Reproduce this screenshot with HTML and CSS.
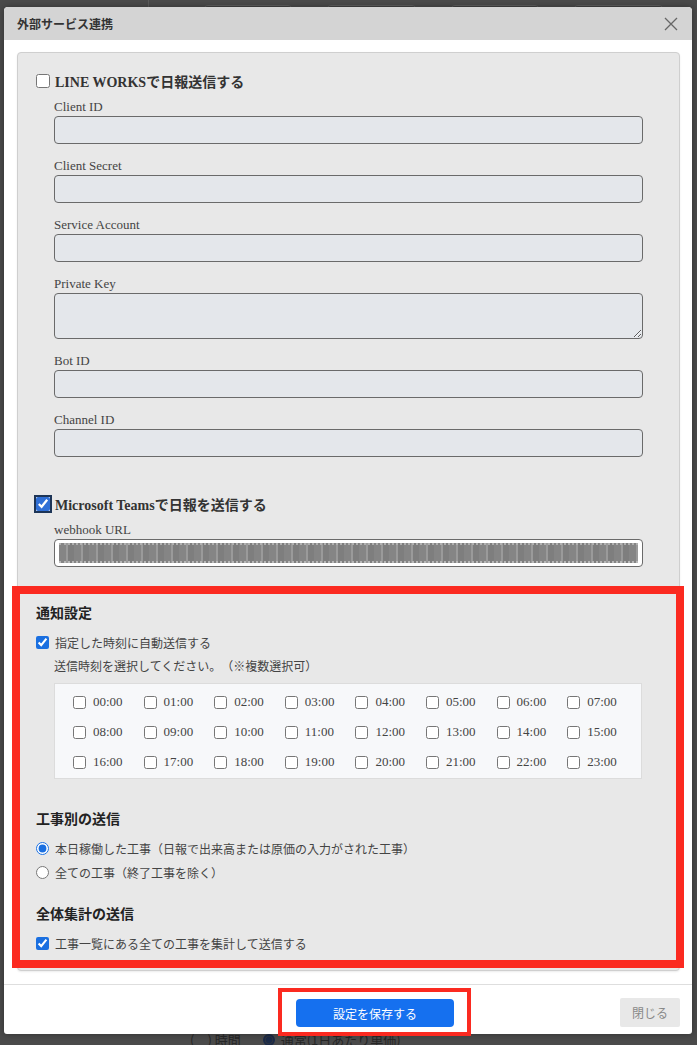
FILE: index.html
```html
<!DOCTYPE html>
<html lang="ja">
<head>
  <meta charset="UTF-8" />
  <meta name="viewport" content="width=device-width, initial-scale=1.0"/>
  <title>外部サービス連携</title>
  <link rel="stylesheet" href="styles.css">
</head>
<body>
  <div class="page-top">
    <span class="page-divider"></span>
    <span class="page-btn"></span>
    <span class="page-btn"></span>
    <span class="page-btn"></span>
    <span class="page-btn"></span>
  </div>

  <div class="modal">
    <div class="modal-header">
      <span class="modal-title">外部サービス連携</span>
      <button class="close-btn" type="button" aria-label="閉じる">
        <svg width="14" height="14" viewBox="0 0 14 14"><path d="M1 1 L13 13 M13 1 L1 13" stroke="#666" stroke-width="1.3" fill="none"/></svg>
      </button>
    </div>

    <div class="modal-body">
      <div class="panel">
        <label class="service-check"><input type="checkbox"> LINE WORKSで日報送信する</label>
        <div class="fields">
          <label class="field-label">Client ID</label>
          <input class="field" type="text">
          <label class="field-label">Client Secret</label>
          <input class="field" type="text">
          <label class="field-label">Service Account</label>
          <input class="field" type="text">
          <label class="field-label">Private Key</label>
          <textarea class="field area"></textarea>
          <label class="field-label">Bot ID</label>
          <input class="field" type="text">
          <label class="field-label">Channel ID</label>
          <input class="field" type="text">
        </div>

        <label class="service-check teams"><input type="checkbox" checked> Microsoft Teamsで日報を送信する</label>
        <div class="fields">
          <label class="field-label">webhook URL</label>
          <div class="field url"><span class="redacted"></span></div>
        </div>

        <section class="notify">
          <h3 class="notify-title">通知設定</h3>
          <label class="opt"><input type="checkbox" checked> 指定した時刻に自動送信する</label>
          <p class="hint">送信時刻を選択してください。（※複数選択可）</p>
          <div class="times">
            <label class="time"><input type="checkbox"> 00:00</label>
            <label class="time"><input type="checkbox"> 01:00</label>
            <label class="time"><input type="checkbox"> 02:00</label>
            <label class="time"><input type="checkbox"> 03:00</label>
            <label class="time"><input type="checkbox"> 04:00</label>
            <label class="time"><input type="checkbox"> 05:00</label>
            <label class="time"><input type="checkbox"> 06:00</label>
            <label class="time"><input type="checkbox"> 07:00</label>
            <label class="time"><input type="checkbox"> 08:00</label>
            <label class="time"><input type="checkbox"> 09:00</label>
            <label class="time"><input type="checkbox"> 10:00</label>
            <label class="time"><input type="checkbox"> 11:00</label>
            <label class="time"><input type="checkbox"> 12:00</label>
            <label class="time"><input type="checkbox"> 13:00</label>
            <label class="time"><input type="checkbox"> 14:00</label>
            <label class="time"><input type="checkbox"> 15:00</label>
            <label class="time"><input type="checkbox"> 16:00</label>
            <label class="time"><input type="checkbox"> 17:00</label>
            <label class="time"><input type="checkbox"> 18:00</label>
            <label class="time"><input type="checkbox"> 19:00</label>
            <label class="time"><input type="checkbox"> 20:00</label>
            <label class="time"><input type="checkbox"> 21:00</label>
            <label class="time"><input type="checkbox"> 22:00</label>
            <label class="time"><input type="checkbox"> 23:00</label>
          </div>

          <h3 class="notify-title spaced">工事別の送信</h3>
          <label class="opt"><input type="radio" name="scope" checked> 本日稼働した工事（日報で出来高または原価の入力がされた工事）</label>
          <label class="opt tight"><input type="radio" name="scope"> 全ての工事（終了工事を除く）</label>

          <h3 class="notify-title spaced-sm">全体集計の送信</h3>
          <label class="opt"><input type="checkbox" checked> 工事一覧にある全ての工事を集計して送信する</label>
        </section>
      </div>
    </div>

    <div class="modal-footer">
      <div class="mark">
        <button class="save-btn" type="button">設定を保存する</button>
      </div>
      <button class="close-footer" type="button">閉じる</button>
    </div>
  </div>

  <div class="page-bottom">
    <span>(　) 時間</span>
    <span class="dim-radio"></span>
    <span>通常(1日あたり単価)</span>
  </div>
</body>
</html>
```

FILE: styles.css
```css
body {
  margin: 0;
  background: #4a4a4a;
  font-family: "Liberation Serif", "Noto Sans CJK JP", serif;
  color: #333;
  overflow: hidden;
}
.page-top {
  height: 7px;
  overflow: hidden;
  display: flex;
  align-items: flex-start;
}
.page-divider {
  width: 1px;
  height: 7px;
  background: #5c5c5c;
  margin-left: 148px;
  margin-right: 54px;
}
.page-btn {
  width: 96px;
  height: 20px;
  margin-top: 5px;
  margin-right: 33px;
  border: 1px solid #5e5e5e;
  border-radius: 5px;
  background: #424242;
}
.modal {
  position: relative;
  z-index: 1;
  width: 688px;
  margin-left: 4px;
  background: white;
  border-radius: 4px 4px 3px 3px;
  box-shadow: 0 0 6px rgba(0,0,0,0.35);
}
.modal-header {
  height: 33px;
  background: #d4d4d4;
  border-radius: 4px 4px 0 0;
  display: flex;
  align-items: center;
  justify-content: space-between;
  padding: 0 14px 0 13px;
}
.modal-title {
  font-family: "Noto Sans CJK JP", sans-serif;
  font-size: 12px;
  font-weight: bold;
  color: #333;
}
.close-btn {
  border: none;
  background: none;
  padding: 0;
  width: 14px;
  height: 14px;
  display: flex;
}
.modal-body {
  padding: 12px 12px 13px 13px;
}
.panel {
  background: #e8e8e8;
  border: 1px solid #cfcfcf;
  border-radius: 4px;
  padding: 18px 18px 1px 18px;
  box-shadow: 0 1px 2px rgba(0,0,0,0.08);
}
.service-check {
  display: flex;
  align-items: center;
  gap: 5px;
  height: 20px;
  font-size: 14px;
  font-weight: bold;
  color: #333;
}
.service-check input {
  width: 14px;
  height: 14px;
  margin: 0;
}
.service-check.teams {
  margin-top: 37px;
}
.service-check.teams input {
  width: 14px;
  height: 14px;
  margin-left: 0;
  outline: 2px solid #1d3557;
  outline-offset: 0;
  accent-color: #2f6fd6;
}
.fields {
  padding: 0 18px;
  margin-top: 8px;
}
.field-label {
  display: block;
  height: 16px;
  line-height: 16px;
  font-size: 13px;
  color: #444;
  margin-bottom: 1px;
}
.field {
  display: block;
  box-sizing: border-box;
  width: 100%;
  height: 28px;
  margin: 0 0 14px 0;
  background: #e4e7eb;
  border: 1px solid #6a6a6a;
  border-radius: 4px;
  font-family: inherit;
}
.field.area {
  height: 46px;
  resize: vertical;
}
.field.url {
  background: white;
  margin-bottom: 0;
  padding: 3px 4px;
}
.redacted {
  display: block;
  height: 20px;
  background: repeating-linear-gradient(90deg, #858585 0 7px, #9a9a9a 7px 9px, #7e7e7e 9px 15px);
  border-top: 2px dotted #b0b0b0;
  border-bottom: 2px dotted #b8b8b8;
  box-sizing: border-box;
}
.notify {
  margin: 19px -23px 1px -24px;
  border: 8px solid #fb2a20;
  padding: 8px 34px 7px 16px;
  font-family: "Noto Sans CJK JP", sans-serif;
  text-spacing-trim: space-all;
}
.notify-title {
  margin: 0;
  height: 20px;
  line-height: 20px;
  font-size: 14px;
  font-weight: bold;
  color: #222;
}
.notify-title.spaced {
  margin-top: 29px;
}
.notify-title.spaced-sm {
  margin-top: 21px;
}
.opt {
  display: flex;
  align-items: center;
  gap: 6px;
  height: 20px;
  margin-top: 10px;
  font-size: 12px;
  color: #444;
}
.opt.tight {
  margin-top: 4px;
}
.opt input {
  width: 13px;
  height: 13px;
  margin: 0;
  accent-color: #1a6fe0;
}
.hint {
  margin: 4px 0 0 18px;
  height: 20px;
  line-height: 20px;
  font-size: 12px;
  color: #444;
}
.times {
  margin: 7px 0 0 18px;
  background: #f7f8fa;
  border: 1px solid #dcdcdc;
  padding: 3px 0 1px 18px;
  display: grid;
  grid-template-columns: repeat(8, 70.6px);
  grid-auto-rows: 30px;
}
.time {
  display: flex;
  align-items: center;
  gap: 7px;
  font-family: "Liberation Serif", serif;
  font-size: 13px;
  color: #444;
}
.time input {
  width: 13px;
  height: 13px;
  margin: 0;
}
.modal-footer {
  box-sizing: border-box;
  height: 50px;
  border-top: 1px solid #dedede;
  padding: 3px 12px 0 12px;
  display: flex;
  justify-content: flex-end;
  align-items: flex-start;
  gap: 149px;
}
.mark {
  border: 4px solid #fb2a20;
  padding: 7px 13px 5px 14px;
}
.save-btn {
  display: block;
  width: 158px;
  height: 28px;
  background: #1570ef;
  color: white;
  border: none;
  border-radius: 4px;
  font-family: "Noto Sans CJK JP", sans-serif;
  font-size: 12px;
}
.close-footer {
  margin-top: 10px;
  width: 60px;
  height: 29px;
  background: #e8e8e8;
  color: #888;
  border: none;
  border-radius: 2px;
  font-family: "Noto Sans CJK JP", sans-serif;
  font-size: 12px;
}
.page-bottom {
  margin-top: -4px;
  padding-left: 190px;
  display: flex;
  align-items: center;
  gap: 6px;
  font-family: "Noto Sans CJK JP", sans-serif;
  font-size: 13px;
  color: #262626;
}
.page-bottom span:first-child {
  margin-right: 16px;
}
.dim-radio {
  width: 12px;
  height: 12px;
  border-radius: 50%;
  border: 2px solid #1b2a47;
  background: radial-gradient(circle, #1b2a47 0 3px, #3a3a3a 4px);
  box-sizing: border-box;
}
```
